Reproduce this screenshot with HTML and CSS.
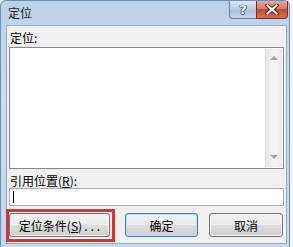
FILE: index.html
```html
<!DOCTYPE html>
<html lang="zh-CN">
<head>
    <meta charset="UTF-8">
    <title>定位</title>
    <link rel="stylesheet" href="styles.css">
</head>
<body>

    <div class="window">
        <div class="titlebar">
            <span class="title">定位</span>
            <div class="caption-buttons">
                <div class="cap help">?</div>
                <div class="cap close">
                    <svg width="14" height="11" viewBox="0 0 14 11">
                        <path d="M2.5 1.5 L11.5 9.5 M11.5 1.5 L2.5 9.5" stroke="#5a1a10" stroke-width="4" stroke-linecap="square"/>
                        <path d="M2.5 1.5 L11.5 9.5 M11.5 1.5 L2.5 9.5" stroke="#ffffff" stroke-width="2.2" stroke-linecap="square"/>
                    </svg>
                </div>
            </div>
        </div>

        <div class="client">
            <div class="field-label">定位:</div>
            <div class="listbox">
                <div class="list-area"></div>
                <div class="scrollbar">
                    <span class="arrow up"></span>
                    <span class="arrow down"></span>
                </div>
            </div>

            <div class="field-label spaced">引用位置(<u>R</u>):</div>
            <div class="textbox"><span class="caret"></span></div>

            <div class="actions">
                <div class="highlight">
                    <button class="btn wide">定位条件(<u>S</u>)<span class="dots">...</span></button>
                </div>
                <button class="btn default ok">确定</button>
                <button class="btn cancel">取消</button>
            </div>
        </div>
    </div>

</body>
</html>
```

FILE: styles.css
```css
* {
    margin: 0;
    padding: 0;
    box-sizing: border-box;
}

body {
    background: #f3f5f8;
    font-family: "Noto Sans CJK SC", "Noto Sans", sans-serif;
    font-size: 12px;
    color: #000;
    width: 293px;
    height: 247px;
    overflow: hidden;
}

.window {
    width: 290px;
    height: 247px;
    display: flex;
    flex-direction: column;
    background: linear-gradient(to bottom, #bcd2ea, #cadcf0 40%, #c3d8ee);
    border: 1px solid #6f8fb5;
    border-bottom: none;
    border-radius: 6px 6px 0 0;
}

.titlebar {
    height: 24px;
    display: flex;
    align-items: flex-start;
    justify-content: space-between;
}

.title {
    padding-left: 7px;
    padding-top: 5px;
    line-height: 14px;
    color: #1a1a1a;
}

.caption-buttons {
    display: flex;
    margin-right: 1px;
}

.cap {
    height: 18px;
    display: flex;
    align-items: center;
    justify-content: center;
    border: 1px solid #5f7ea6;
    border-top: none;
}

.help {
    width: 27px;
    border-radius: 0 0 0 4px;
    border-right: none;
    background: linear-gradient(to bottom, #d9e6f3, #b9cde4 50%, #a7bfdb 51%, #c3d6ea);
    color: #ffffff;
    font-family: "DejaVu Sans", sans-serif;
    font-weight: bold;
    font-size: 13px;
    text-shadow: 0 0 1px #2e4a6e, 1px 0 0 #4a6688, -1px 0 0 #4a6688, 0 1px 0 #4a6688;
}

.close {
    width: 32px;
    border-radius: 0 0 4px 0;
    border-color: #7a2d1e;
    background: linear-gradient(to bottom, #e9a899, #d87a63 45%, #c44a2c 50%, #d5704f);
}

.client {
    flex: 1;
    margin: 0 2px 3px 5px;
    background: #f0f0f0;
    border: 1px solid #93a9c4;
    padding: 4px 2px 0 2px;
    display: flex;
    flex-direction: column;
}

.field-label {
    line-height: 15px;
    height: 15px;
    padding-left: 1px;
}

.field-label.spaced {
    margin-top: 4px;
}

.listbox {
    margin-top: 2px;
    height: 122px;
    border: 1px solid #828790;
    background: #ffffff;
    display: flex;
}

.list-area {
    flex: 1;
}

.scrollbar {
    width: 17px;
    margin: 1px 1px 1px 0;
    background: linear-gradient(to right, #e6e6e6, #f3f3f3 40%, #f3f3f3 60%, #e9e9e9);
    border-left: 1px solid #e2e2e2;
    display: flex;
    flex-direction: column;
    justify-content: space-between;
    align-items: center;
    padding: 7px 0 8px;
}

.arrow {
    width: 0;
    height: 0;
    border-left: 4px solid transparent;
    border-right: 4px solid transparent;
}

.arrow.up {
    border-bottom: 4px solid #a3a3a3;
}

.arrow.down {
    border-top: 4px solid #a3a3a3;
}

.textbox {
    height: 18px;
    border: 1px solid #abadb3;
    background: #ffffff;
    padding: 2px 0 0 3px;
}

.caret {
    display: block;
    width: 1px;
    height: 12px;
    background: #000;
}

.actions {
    margin-top: 3px;
    margin-left: -3px;
    display: flex;
    align-items: flex-start;
}

.highlight {
    border: 3px solid #e0312f;
    padding: 1px 2px 2px 0;
}

.btn {
    height: 24px;
    font-family: "Noto Sans CJK SC", "Noto Sans", sans-serif;
    font-size: 12px;
    color: #000;
    border: 1px solid #707070;
    border-radius: 3px;
    background: linear-gradient(to bottom, #f2f2f2, #ebebeb 49%, #dddddd 50%, #cfcfcf);
    box-shadow: inset 0 0 0 1px #fcfcfc;
}

.btn.wide {
    width: 101px;
    padding-left: 3px;
}

.dots {
    letter-spacing: 3px;
    margin-left: 2px;
}

.btn.default {
    border-color: #3c7fb1;
    box-shadow: inset 0 0 0 1px #b9e1f9;
}

.ok {
    width: 73px;
    margin-left: 10px;
    margin-top: 4px;
}

.cancel {
    width: 74px;
    margin-left: 11px;
    margin-top: 4px;
}
```
